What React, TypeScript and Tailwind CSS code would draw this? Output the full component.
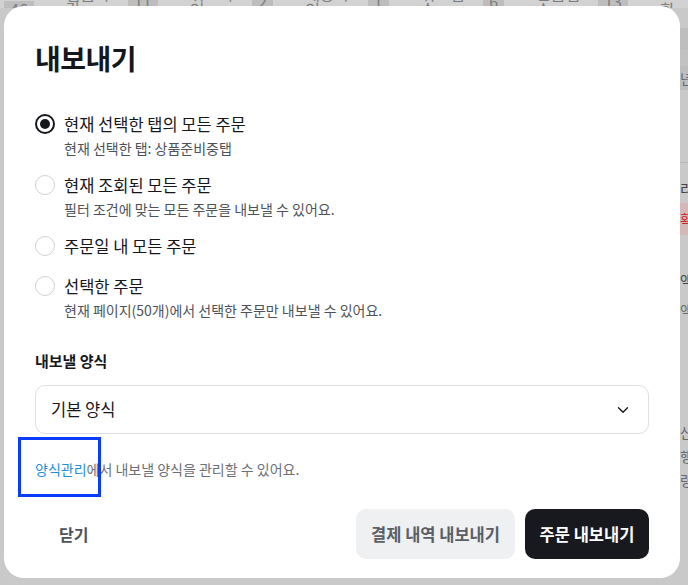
import { ChevronDown } from "lucide-react";

const font = { fontFamily: '"Noto Sans CJK KR", "Noto Sans", sans-serif' };

const tabs = [
  ["", "46"],
  ["입금마감", "11"],
  ["취소확인", "2"],
  ["배송확인", "1"],
  ["취소접수", "6"],
  ["반품접수", "13"],
  ["교환", ""],
];

const options = [
  { label: "현재 선택한 탭의 모든 주문", hint: "현재 선택한 탭: 상품준비중탭", checked: true },
  { label: "현재 조회된 모든 주문", hint: "필터 조건에 맞는 모든 주문을 내보낼 수 있어요." },
  { label: "주문일 내 모든 주문" },
  { label: "선택한 주문", hint: "현재 페이지(50개)에서 선택한 주문만 내보낼 수 있어요." },
];

function Radio({ checked }: { checked?: boolean }) {
  return checked ? (
    <span className="grid h-5 w-5 shrink-0 place-items-center rounded-full border-2 border-[#15171c]">
      <span className="h-2.5 w-2.5 rounded-full bg-[#15171c]" />
    </span>
  ) : (
    <span className="h-5 w-5 shrink-0 rounded-full border border-[#cfd1d5] bg-white" />
  );
}

export default function App() {
  return (
    <div className="relative h-[585px] w-[688px] overflow-hidden bg-[#c9c9c9]" style={font}>
      {/* dimmed page behind */}
      <div className="flex h-[8px] items-end gap-8 overflow-hidden bg-[#d2d2d2] pl-1 text-[16px] leading-none text-[#7d7d7d]">
        {tabs.map(([name, n], i) => (
          <div key={i} className="flex translate-y-[9px] items-center gap-2">
            {name && <span>{name}</span>}
            {n && <span className="bg-[#bdbdbd] px-1.5">{n}</span>}
          </div>
        ))}
      </div>
      <div className="absolute right-0 top-[28px] flex w-[8px] flex-col text-[14px] text-[#6a6a6a]">
        <div className="h-[22px] bg-[#bebebe]" />
        <div className="h-[16px] bg-[#c2c2c2]" />
        <div className="h-[24px] bg-[#bdbdbd] leading-[24px]">년</div>
        <div className="h-[72px]" />
        <div className="h-px bg-[#b8b8b8]" />
        <div className="h-[10px]" />
        <div className="h-[30px] leading-[30px] text-[#444]">리</div>
        <div className="h-[32px] bg-[#d4b7b7] leading-[32px] text-[#c62828]">확</div>
        <div className="h-[30px]" />
        <div className="h-[30px] leading-[30px] text-[#444]">액</div>
        <div className="h-[30px] leading-[30px]">액</div>
        <div className="h-[95px]" />
        <div className="leading-[24px]">산</div>
        <div className="leading-[24px]">행</div>
        <div className="leading-[24px]">령</div>
      </div>

      {/* modal */}
      <div className="absolute left-[4px] top-[6px] flex h-[572px] w-[676px] flex-col rounded-[20px] bg-white px-[31px] pt-[34px]">
        <h1 className="text-[28px] font-bold leading-[36px] tracking-[-0.5px] text-[#15171c]">내보내기</h1>

        <div className="mt-[35px] flex flex-col gap-[14px]">
          {options.map((o) => (
            <div key={o.label} className="flex flex-col">
              <div className="flex h-[26px] items-center gap-[9px]">
                <Radio checked={o.checked} />
                <span className="text-[16.5px] leading-[24px] text-[#15171c]">{o.label}</span>
              </div>
              {o.hint && (
                <div className="pl-[29px] pt-[1px] text-[14px] leading-[20px] text-[#4e5259]">{o.hint}</div>
              )}
            </div>
          ))}
        </div>

        <div className="mt-[30px] text-[15px] font-bold leading-[22px] text-[#15171c]">내보낼 양식</div>
        <button className="mt-[13px] flex h-[49px] w-full items-center justify-between rounded-[10px] border border-[#dddfe3] bg-white pl-[15px] pr-[16px] text-[16.5px] text-[#15171c]">
          <span>기본 양식</span>
          <ChevronDown className="h-[18px] w-[18px] text-[#15171c]" strokeWidth={1.8} />
        </button>

        <div className="relative mt-[25px] text-[14px] leading-[20px] text-[#6b6f76]">
          <span className="text-[#1f8fd6]">양식관리</span>에서 내보낼 양식을 관리할 수 있어요.
          <span className="pointer-events-none absolute left-[-17px] top-[-22px] h-[60px] w-[83px] border-[3px] border-[#0a3cff]" />
        </div>

        <div className="mt-auto mb-[19px] flex items-center justify-between">
          <button className="h-[50px] px-[24px] text-[16px] font-bold text-[#4e5259]">닫기</button>
          <div className="flex gap-[10px]">
            <button className="h-[50px] w-[159px] rounded-[10px] bg-[#eff0f2] text-[16.5px] font-bold text-[#5a5e66]">
              결제 내역 내보내기
            </button>
            <button className="h-[50px] w-[124px] rounded-[10px] bg-[#17191e] text-[16.5px] font-bold text-white">
              주문 내보내기
            </button>
          </div>
        </div>
      </div>
    </div>
  );
}
